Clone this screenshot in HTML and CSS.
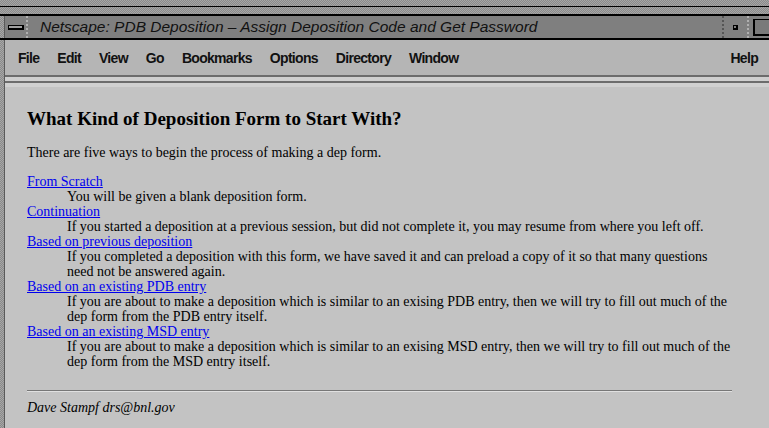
FILE: index.html
```html
<!DOCTYPE html>
<html lang="en">

<head>
    <meta charset="UTF-8" />
    <meta name="viewport" content="width=device-width, initial-scale=1.0" />
    <title>Netscape: PDB Deposition</title>
    <link rel="stylesheet" href="styles.css">
</head>

<body>
    <div class="window">
        <div class="frame-top"></div>
        <div class="titlebar">
            <div class="frame-side"></div>
            <div class="win-btn menu-btn"><span class="bar"></span></div>
            <div class="title">Netscape: PDB Deposition &ndash; Assign Deposition Code and Get Password</div>
            <div class="win-btn min-btn"><span class="dot"></span></div>
            <div class="win-btn max-btn"><span class="box"></span></div>
        </div>

        <div class="main">
            <div class="frame-side"></div>
            <div class="browser">
                <ul class="menubar">
                    <li>File</li>
                    <li>Edit</li>
                    <li>View</li>
                    <li>Go</li>
                    <li>Bookmarks</li>
                    <li>Options</li>
                    <li>Directory</li>
                    <li>Window</li>
                    <li class="help">Help</li>
                </ul>
                <div class="menu-rule"></div>

                <div class="page">
                    <h2>What Kind of Deposition Form to Start With?</h2>
                    <p>There are five ways to begin the process of making a dep form.</p>
                    <dl>
                        <dt><a href="#">From Scratch</a></dt>
                        <dd>You will be given a blank deposition form.</dd>
                        <dt><a href="#">Continuation</a></dt>
                        <dd>If you started a deposition at a previous session, but did not complete it, you may resume from where you left off.</dd>
                        <dt><a href="#">Based on previous deposition</a></dt>
                        <dd>If you completed a deposition with this form, we have saved it and can preload a copy of it so that many questions need not be answered again.</dd>
                        <dt><a href="#">Based on an existing PDB entry</a></dt>
                        <dd>If you are about to make a deposition which is similar to an exising PDB entry, then we will try to fill out much of the dep form from the PDB entry itself.</dd>
                        <dt><a href="#">Based on an existing MSD entry</a></dt>
                        <dd>If you are about to make a deposition which is similar to an exising MSD entry, then we will try to fill out much of the dep form from the MSD entry itself.</dd>
                    </dl>
                    <hr>
                    <address>Dave Stampf drs@bnl.gov</address>
                </div>
            </div>
        </div>
    </div>
</body>

</html>
```

FILE: styles.css
```css
* {
    margin: 0;
    padding: 0;
    box-sizing: border-box;
}

body {
    width: 769px;
    height: 428px;
    overflow: hidden;
    background: #c3c3c3;
}

.window {
    display: flex;
    flex-direction: column;
    height: 100%;
}

/* window frame, the dotted grey of the old motif look */
.frame-top {
    height: 16px;
    background:
        linear-gradient(#000, #000) 0 6px / 100% 1px no-repeat,
        linear-gradient(#000, #000) 0 14px / 100% 2px no-repeat,
        repeating-conic-gradient(#8a8a8a 0 25%, #a6a6a6 0 50%) 0 0 / 2px 2px;
}

.frame-side {
    width: 5px;
    flex-shrink: 0;
    background: repeating-conic-gradient(#8a8a8a 0 25%, #a6a6a6 0 50%) 0 0 / 2px 2px;
    border-right: 1px solid #5a5a5a;
}

.titlebar {
    display: flex;
    height: 24px;
    background: #7f7f7f;
    border-bottom: 2px solid #000;
}

.win-btn {
    display: flex;
    align-items: center;
    justify-content: center;
    background: #808080;
}

.menu-btn {
    width: 23px;
    border-right: 2px dotted #b0b0b0;
}

.menu-btn .bar {
    width: 16px;
    height: 5px;
    background: #a0a0a0;
    border: 1px solid #000;
    border-width: 1px 2px 2px 1px;
}

.title {
    flex: 1;
    padding-left: 12px;
    font-family: "Liberation Sans", Arial, sans-serif;
    font-style: italic;
    font-size: 15.5px;
    line-height: 22px;
    color: #111;
}

.min-btn {
    width: 27px;
    border-left: 2px dotted #555;
    border-right: 2px dotted #b0b0b0;
}

.min-btn .dot {
    width: 5px;
    height: 5px;
    border: 2px solid #000;
    border-width: 1px 2px 2px 1px;
}

.max-btn {
    width: 20px;
    justify-content: flex-end;
}

.max-btn .box {
    width: 16px;
    height: 17px;
    border: 1px solid #000;
    border-width: 1px 0 2px 2px;
    background: #7a7a7a;
}

.main {
    flex: 1;
    display: flex;
}

.browser {
    flex: 1;
    display: flex;
    flex-direction: column;
}

.menubar {
    list-style: none;
    display: flex;
    height: 35px;
    align-items: center;
    padding-left: 13px;
    background: #b5b5b5;
    font-family: "Liberation Sans", Arial, sans-serif;
    font-weight: bold;
    font-size: 14px;
    letter-spacing: -0.7px;
    color: #111;
}

.menubar li {
    margin-right: 18px;
}

.menubar .help {
    margin-left: auto;
    margin-right: 11px;
}

.menu-rule {
    height: 12px;
    background:
        linear-gradient(#6c6c6c, #6c6c6c) 0 0 / 100% 2px no-repeat,
        linear-gradient(#cfcfcf, #cfcfcf) 0 2px / 100% 4px no-repeat,
        linear-gradient(#6c6c6c, #6c6c6c) 0 6px / 100% 2px no-repeat,
        #d0d0d0;
}

.page {
    flex: 1;
    padding: 21px 37px 0 22px;
    background: #c3c3c3;
    font-family: "Liberation Serif", "Times New Roman", serif;
    font-size: 14px;
    line-height: 15px;
    color: #000;
}

h2 {
    font-size: 19px;
    line-height: 22px;
    margin-bottom: 15px;
}

p {
    margin-bottom: 14px;
}

a {
    color: #0000ee;
}

dd {
    margin-left: 40px;
}

hr {
    margin-top: 21px;
    border: 0;
    border-top: 1px solid #777;
    border-bottom: 1px solid #e0e0e0;
}

address {
    margin-top: 8px;
}
```
